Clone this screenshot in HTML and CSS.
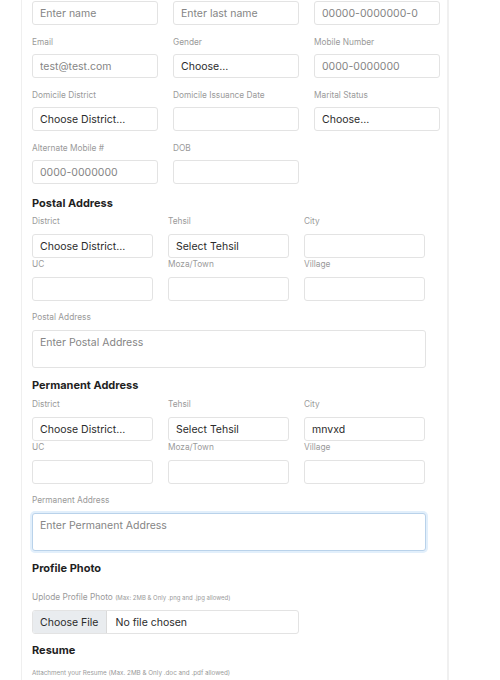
FILE: index.html
```html
<!DOCTYPE html>
<html lang="en">
<head>
<meta charset="utf-8">
<title>Profile Form</title>
<link rel="stylesheet" href="styles.css">
</head>
<body>
<div class="card">
  <div class="grid3">
    <div class="field"><input class="ctl" placeholder="Enter name"></div>
    <div class="field"><input class="ctl" placeholder="Enter last name"></div>
    <div class="field"><input class="ctl" placeholder="00000-0000000-0"></div>

    <div class="field"><label class="lbl">Email</label><input class="ctl" placeholder="test@test.com"></div>
    <div class="field"><label class="lbl">Gender</label><div class="ctl sel">Choose...</div></div>
    <div class="field"><label class="lbl">Mobile Number</label><input class="ctl" placeholder="0000-0000000"></div>

    <div class="field"><label class="lbl">Domicile District</label><div class="ctl sel">Choose District...</div></div>
    <div class="field"><label class="lbl">Domicile Issuance Date</label><input class="ctl"></div>
    <div class="field"><label class="lbl">Marital Status</label><div class="ctl sel">Choose...</div></div>

    <div class="field"><label class="lbl">Alternate Mobile #</label><input class="ctl" placeholder="0000-0000000"></div>
    <div class="field"><label class="lbl">DOB</label><input class="ctl"></div>
  </div>

  <h3 class="heading h-postal">Postal Address</h3>
  <div class="grid-addr g-postal">
    <div class="field"><label class="lbl">District</label><div class="ctl sel">Choose District...</div></div>
    <div class="field"><label class="lbl">Tehsil</label><div class="ctl sel">Select Tehsil</div></div>
    <div class="field"><label class="lbl">City</label><input class="ctl"></div>
    <div class="field"><label class="lbl">UC</label><input class="ctl"></div>
    <div class="field"><label class="lbl">Moza/Town</label><input class="ctl"></div>
    <div class="field"><label class="lbl">Village</label><input class="ctl"></div>
  </div>
  <div class="field area-field">
    <label class="lbl">Postal Address</label>
    <textarea class="ctl area" placeholder="Enter Postal Address"></textarea>
  </div>

  <h3 class="heading h-perm">Permanent Address</h3>
  <div class="grid-addr g-perm">
    <div class="field"><label class="lbl">District</label><div class="ctl sel">Choose District...</div></div>
    <div class="field"><label class="lbl">Tehsil</label><div class="ctl sel">Select Tehsil</div></div>
    <div class="field"><label class="lbl">City</label><input class="ctl val" value="mnvxd"></div>
    <div class="field"><label class="lbl">UC</label><input class="ctl"></div>
    <div class="field"><label class="lbl">Moza/Town</label><input class="ctl"></div>
    <div class="field"><label class="lbl">Village</label><input class="ctl"></div>
  </div>
  <div class="field area-field">
    <label class="lbl">Permanent Address</label>
    <textarea class="ctl area focus" placeholder="Enter Permanent Address"></textarea>
  </div>

  <h3 class="heading h-photo">Profile Photo</h3>
  <div class="field photo-field">
    <label class="lbl">Uplode Profile Photo <small class="tiny">(Max: 2MB &amp; Only .png and .jpg allowed)</small></label>
    <div class="ctl file"><span class="file-btn">Choose File</span><span class="file-name">No file chosen</span></div>
  </div>

  <h3 class="heading h-resume">Resume</h3>
  <div class="resume-lbl">Attachment your Resume (Max. 2MB &amp; Only .doc and .pdf allowed)</div>
</div>
</body>
</html>
```

FILE: styles.css
```css
html, body {
  margin: 0;
  padding: 0;
  background: #ffffff;
}
body {
  font-family: Inter, "Noto Sans", "Liberation Sans", sans-serif;
  color: #333;
  overflow: hidden;
}
.card {
  margin: 0 0 0 21px;
  padding: 1px 0 0 10px;
  width: 428px;
  min-height: 700px;
  border-left: 1px solid #efefef;
  border-right: 2px solid #f0f0f0;
  box-sizing: border-box;
}
.grid3 {
  display: grid;
  grid-template-columns: 126px 126px 126px;
  column-gap: 15px;
  row-gap: 11px;
}
.field {
  display: flex;
  flex-direction: column;
}
.lbl {
  display: block;
  height: 12px;
  line-height: 12px;
  font-size: 8.3px;
  color: #9a9a9a;
  margin-bottom: 6px;
  white-space: nowrap;
}
.grid-addr .lbl,
.area-field .lbl,
.photo-field .lbl {
  margin-bottom: 7px;
}
.ctl {
  box-sizing: border-box;
  height: 24px;
  width: 100%;
  border: 1px solid #e3e3e3;
  border-radius: 3px;
  background: #fff;
  padding: 0 7px;
  font-family: inherit;
  font-size: 10.5px;
  color: #333;
  outline: none;
  margin: 0;
}
.ctl::placeholder {
  color: #858585;
}
.sel {
  display: flex;
  align-items: center;
  color: #2b2b2b;
}
.val {
  color: #2b2b2b;
}
.heading {
  margin: 0;
  font-size: 11px;
  line-height: 14px;
  font-weight: 700;
  color: #1f1f1f;
}
.h-postal { margin-top: 12px; }
.h-perm { margin-top: 10px; }
.h-photo { margin-top: 10px; }
.h-resume { margin-top: 9px; }
.grid-addr {
  display: grid;
  grid-template-columns: 121px 121px 121px;
  column-gap: 15px;
  width: 393px;
}
.g-postal { margin-top: 5px; }
.g-perm { margin-top: 6px; }
.area-field {
  margin-top: 10px;
  width: 394px;
}
.area {
  height: 38px;
  resize: none;
  padding: 5px 7px;
  line-height: 14px;
  display: block;
}
.area.focus {
  border: 1px solid #b9d2ea;
  box-shadow: 0 0 0 2px #e2effb;
}
.photo-field {
  margin-top: 16px;
  width: 267px;
}
.tiny {
  font-size: 6px;
  color: #9a9a9a;
}
.file {
  display: flex;
  align-items: stretch;
  padding: 0;
  overflow: hidden;
}
.file-btn {
  display: flex;
  align-items: center;
  padding: 0 7px;
  background: #e9ecef;
  border-right: 1px solid #dadada;
  color: #2b2b2b;
}
.file-name {
  display: flex;
  align-items: center;
  padding: 0 9px;
  color: #2b2b2b;
}
.resume-lbl {
  margin-top: 12px;
  height: 9px;
  line-height: 9px;
  font-size: 6.3px;
  color: #9a9a9a;
  white-space: nowrap;
}
```
